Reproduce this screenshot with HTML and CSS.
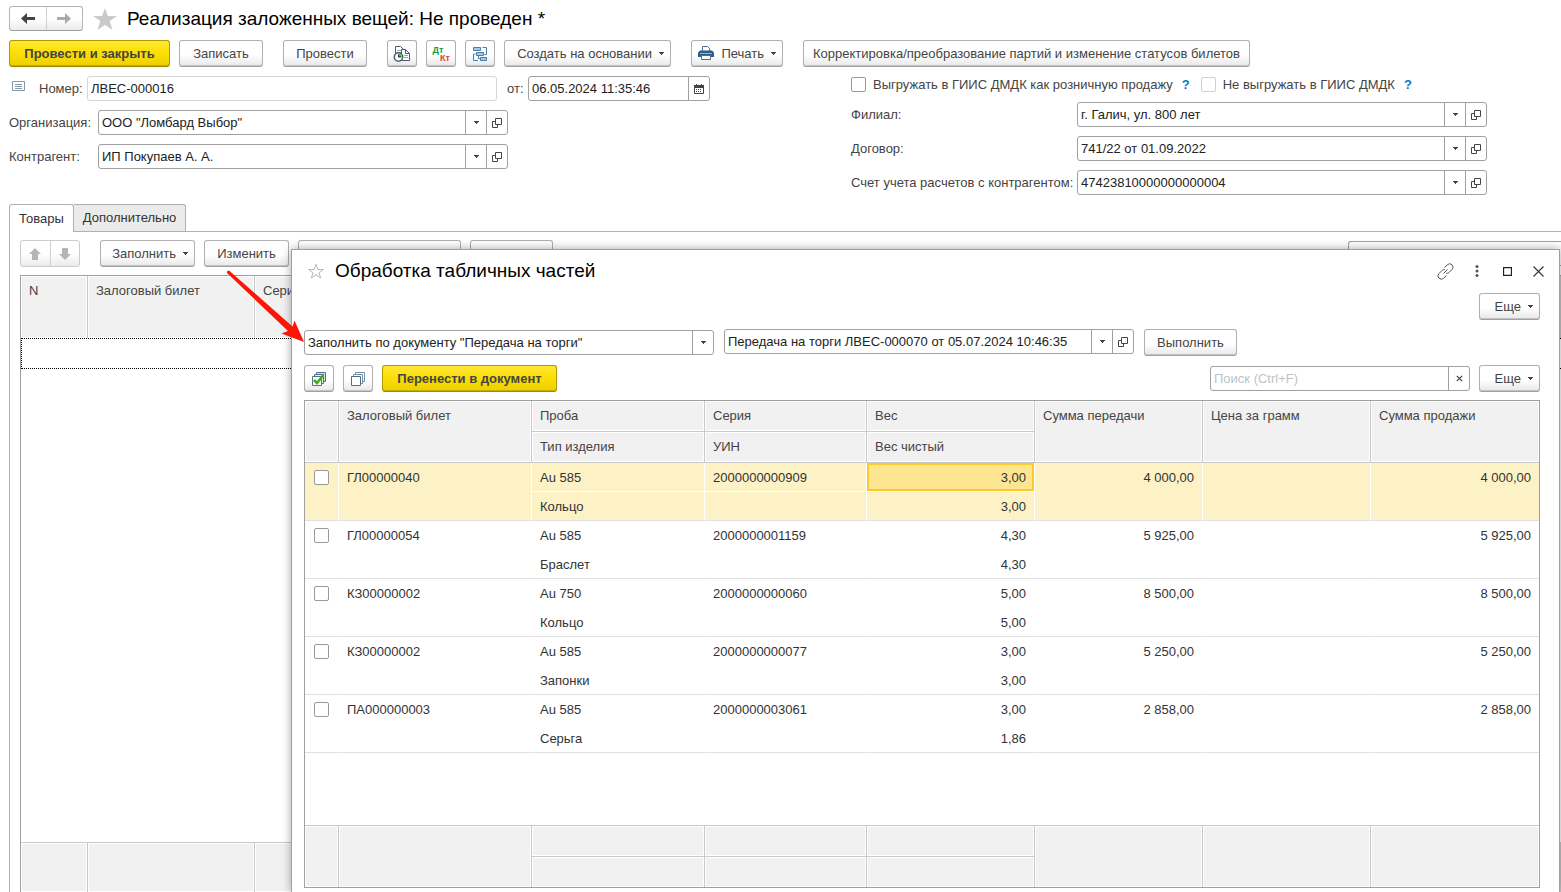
FILE: index.html
```
<!DOCTYPE html>
<html lang="ru">
<head>
<meta charset="utf-8">
<title>Реализация заложенных вещей</title>
<link rel="stylesheet" href="styles.css">
</head>
<body>
<svg class="defs" aria-hidden="true">
  <symbol id="caret" viewBox="0 0 5 3"><path d="M0 0h5v1H4v1H3v1H2V2H1V1H0z"/></symbol>
  <symbol id="open" viewBox="0 0 10 10"><path d="M3.5.5h6v6h-6zM3 3.5H.5v6h5V7" fill="none" stroke="#444"/></symbol>
</svg>
<div class="page">
  <header class="head">
    <div class="pair nav">
      <button type="button" aria-label="Назад"><svg width="14" height="11" viewBox="0 0 14 11"><path d="M0 5.5 6 0v4h8v3H6v4z" fill="#444"/></svg></button>
      <button type="button" aria-label="Вперед"><svg width="14" height="11" viewBox="0 0 14 11"><path d="M14 5.5 8 0v4H0v3h8v4z" fill="#aaa"/></svg></button>
    </div>
    <svg class="star" width="24" height="22" viewBox="0 0 24 22"><path d="m12 0 2.9 8H24l-7.300 5.100L19.500 22 12 16.700 4.500 22l2.800-8.900L0 8h9.100z" fill="#c8cacc"/></svg>
    <h1>Реализация заложенных вещей: Не проведен *</h1>
  </header>

  <div class="bar commands">
    <button type="button" class="btn main post">Провести и закрыть</button>
    <button type="button" class="btn save wide-gap">Записать</button>
    <button type="button" class="btn save wide-gap">Провести</button>
    <button type="button" class="btn icon" aria-label="Движения документа"><svg width="18" height="18" viewBox="0 0 18 18" fill="#fff" stroke="#47606f"><path d="M2.500 1.500h5l3 3v8h-8z"/><path d="M4 5.500h4M4 7.500h4" stroke="#9aabb5"/><path d="M8.500 4.500h4l4 4v7h-8z"/><path d="M12.500 4.500v4h4" fill="none"/><path d="M11 10.500h4M11 12.500h4" stroke="#9aabb5"/><circle cx="5.500" cy="12" r="4.200" stroke-width="1.500"/><path d="M5.500 12V8.500A3.500 3.500 0 0 1 9 12z" fill="#4bc83f" stroke="none"/><path d="M5.500 9.500V12H8" fill="none" stroke="#222"/></svg></button>
    <button type="button" class="btn icon dtkt" aria-label="Проводки"><span class="dt">Дт</span><span class="kt">Кт</span></button>
    <button type="button" class="btn icon" aria-label="Структура подчиненности"><svg width="16" height="16" viewBox="0 0 16 16" fill="#a9c8e4" stroke="#4b7fa8"><path d="M1.500 1.500h7v3h-7zM4.500 6.500h7v3h-7zM8.500 11.500h6v3h-6z"/><path d="M10.500 1.500h4v7h-2M3.500 8H1.500v6.500h4.500M6.500 10v2.500h2" fill="none"/></svg></button>
    <button type="button" class="btn create wide-gap">Создать на основании<svg class="caret"><use href="#caret"/></svg></button>
    <button type="button" class="btn print wide-gap"><svg width="16" height="15" viewBox="0 0 16 15"><path d="M4.500 5V.5h5l2 2V5" fill="#fff" stroke="#4b6f92"/><path d="M2 4.500h12l2 2V11H0V6.500z" fill="#2d5c8a"/><path d="M2 7.500h12" stroke="#8fb4d6"/><path d="M3.500 9.500h9v4h-9z" fill="#fff" stroke="#4b6f92"/></svg>Печать<svg class="caret"><use href="#caret"/></svg></button>
    <button type="button" class="btn adjust">Корректировка/преобразование партий и изменение статусов билетов</button>
  </div>

  <div class="form">
    <div class="rows">
      <div class="row">
        <svg class="note" width="14" height="11" viewBox="0 0 14 11"><path d="M.5.500h12v9H.5z" fill="#fff" stroke="#8699a8"/><path d="M3 3.500h7M3 5.500h7M3 7.500h7" stroke="#8699a8"/></svg>
        <label class="num" for="number">Номер:</label>
        <div class="field soft"><input id="number" value="ЛВЕС-000016"></div>
        <label class="from" for="date">от:</label>
        <div class="field date"><input id="date" value="06.05.2024 11:35:46"><button type="button" aria-label="Календарь"><svg width="10" height="10" viewBox="0 0 10 10"><path d="M.5 1.500h9v8h-9z" fill="none" stroke="#444"/><path d="M0 1h10v3H0zM2 0h1v1H2zM7 0h1v1H7z" fill="#444"/><path d="M2 5.500h6M2 7.500h6" stroke="#444" stroke-dasharray="1 1"/></svg></button></div>
      </div>
      <div class="row">
        <label class="cap" for="org">Организация:</label>
        <div class="field"><input id="org" value='ООО "Ломбард Выбор"'><button type="button" aria-label="Выбрать"><svg class="caret"><use href="#caret"/></svg></button><button type="button" aria-label="Открыть"><svg class="open"><use href="#open"/></svg></button></div>
      </div>
      <div class="row">
        <label class="cap" for="agent">Контрагент:</label>
        <div class="field"><input id="agent" value="ИП Покупаев А. А."><button type="button" aria-label="Выбрать"><svg class="caret"><use href="#caret"/></svg></button><button type="button" aria-label="Открыть"><svg class="open"><use href="#open"/></svg></button></div>
      </div>
    </div>
    <div class="rows right">
      <div class="row checks">
        <input type="checkbox" class="check" id="retail"><label for="retail">Выгружать в ГИИС ДМДК как розничную продажу</label><a class="help" href="#retail">?</a>
        <input type="checkbox" class="check pale" id="noexp"><label for="noexp">Не выгружать в ГИИС ДМДК</label><a class="help" href="#noexp">?</a>
      </div>
      <div class="row">
        <label class="cap" for="branch">Филиал:</label>
        <div class="field"><input id="branch" value="г. Галич, ул. 800 лет"><button type="button" aria-label="Выбрать"><svg class="caret"><use href="#caret"/></svg></button><button type="button" aria-label="Открыть"><svg class="open"><use href="#open"/></svg></button></div>
      </div>
      <div class="row">
        <label class="cap" for="contract">Договор:</label>
        <div class="field"><input id="contract" value="741/22 от 01.09.2022"><button type="button" aria-label="Выбрать"><svg class="caret"><use href="#caret"/></svg></button><button type="button" aria-label="Открыть"><svg class="open"><use href="#open"/></svg></button></div>
      </div>
      <div class="row">
        <label class="cap" for="account">Счет учета расчетов с контрагентом:</label>
        <div class="field"><input id="account" value="47423810000000000004"><button type="button" aria-label="Выбрать"><svg class="caret"><use href="#caret"/></svg></button><button type="button" aria-label="Открыть"><svg class="open"><use href="#open"/></svg></button></div>
      </div>
    </div>
  </div>

  <div class="tabs">
    <button type="button" class="tab active">Товары</button><button type="button" class="tab">Дополнительно</button>
  </div>
  <section class="panel">
    <div class="bar">
      <div class="pair move">
        <button type="button" aria-label="Вверх"><svg width="12" height="12" viewBox="0 0 12 12"><path d="M6 0l6 6H9v6H3V6H0z" fill="#b0b6bb"/></svg></button>
        <button type="button" aria-label="Вниз"><svg width="12" height="12" viewBox="0 0 12 12"><path d="M6 12l6-6H9V0H3v6H0z" fill="#b0b6bb"/></svg></button>
      </div>
      <button type="button" class="btn fill">Заполнить<svg class="caret"><use href="#caret"/></svg></button>
      <button type="button" class="btn edit">Изменить</button>
      <button type="button" class="btn pick">Перенести</button>
      <button type="button" class="btn add">Дополнить</button>
      <div class="field find"><input aria-label="Поиск" placeholder="Поиск (Ctrl+F)"></div>
    </div>
    <div class="goods">
      <table>
        <colgroup><col class="g1"><col class="g2"><col></colgroup>
        <thead><tr><th>N</th><th>Залоговый билет</th><th>Серия</th></tr></thead>
        <tbody><tr><td colspan="3"></td></tr></tbody>
      </table>
      <div class="goods-foot"><span></span><span></span><span></span></div>
    </div>
  </section>

  <section class="dialog" role="dialog" aria-labelledby="dlg">
    <header class="dlg-head">
      <svg width="18" height="16" viewBox="0 0 18 16"><path d="m9 1.300 1.900 5.200h5.600L12 9.800l1.700 5.200L9 11.800 4.300 15 6 9.800 1.500 6.500h5.600z" fill="none" stroke="#b4bac0"/></svg>
      <h2 id="dlg">Обработка табличных частей</h2>
      <div class="tools">
        <button type="button" aria-label="Ссылка"><svg width="17" height="17" viewBox="0 0 17 17" fill="none" stroke="#555"><path d="m7.500 4.500 2.800-2.700a3.200 3.200 0 0 1 4.700 4.700L12 9.500c-.9.800-2 1-3 .7M9.500 12.500l-2.800 2.700A3.200 3.200 0 0 1 2 10.500l3-3c.9-.8 2-1 3-.7M6.500 10.500l4-4"/></svg></button>
        <button type="button" aria-label="Меню"><svg width="4" height="12" viewBox="0 0 4 12" fill="#555"><circle cx="2" cy="1.500" r="1.500"/><circle cx="2" cy="6" r="1.500"/><circle cx="2" cy="10.500" r="1.500"/></svg></button>
        <button type="button" aria-label="Развернуть"><svg width="9" height="9" viewBox="0 0 9 9"><path d="M.5.500h8v8h-8z" fill="none" stroke="#222" stroke-width="1.300"/></svg></button>
        <button type="button" aria-label="Закрыть"><svg width="11" height="11" viewBox="0 0 11 11"><path d="m.5.500 10 10m0-10-10 10" stroke="#333" stroke-width="1.100"/></svg></button>
      </div>
    </header>
    <div class="bar more"><button type="button" class="btn menu">Еще<svg class="caret"><use href="#caret"/></svg></button></div>
    <div class="bar source">
      <div class="field"><input aria-label="Способ заполнения" value='Заполнить по документу "Передача на торги"'><button type="button" aria-label="Выбрать"><svg class="caret"><use href="#caret"/></svg></button></div>
      <div class="field"><input aria-label="Документ" value="Передача на торги ЛВЕС-000070 от 05.07.2024 10:46:35"><button type="button" aria-label="Выбрать"><svg class="caret"><use href="#caret"/></svg></button><button type="button" aria-label="Открыть"><svg class="open"><use href="#open"/></svg></button></div>
      <button type="button" class="btn run">Выполнить</button>
    </div>
    <div class="bar actions">
      <button type="button" class="btn icon" aria-label="Отметить все"><svg width="16" height="16" viewBox="0 0 16 16" fill="#fff" stroke="#56758a"><path d="M5.500 1.500h9v9h-9z" fill="#cfe3c8"/><path d="M3.500 3.500h9v9h-9z" fill="#e4efe0"/><path d="M1.500 5.500h9v9h-9z"/><path d="m3 9 3 3 6-7.500" fill="none" stroke="#3fae1e" stroke-width="2.600"/></svg></button>
      <button type="button" class="btn icon" aria-label="Снять отметки"><svg width="16" height="16" viewBox="0 0 16 16" fill="#fff" stroke="#7890a5"><path d="M5.500 1.500h9v9h-9z"/><path d="M3.500 3.500h9v9h-9z"/><path d="M1.500 5.500h9v9h-9z" stroke="#4f6f88"/></svg></button>
      <button type="button" class="btn main move-to">Перенести в документ</button>
      <div class="field search"><input aria-label="Поиск" placeholder="Поиск (Ctrl+F)"><button type="button" aria-label="Очистить"><svg width="7" height="7" viewBox="0 0 7 7"><path d="m.8.800 5.400 5.400m0-5.400L.8 6.200" stroke="#444" stroke-width="1.200"/></svg></button></div>
      <button type="button" class="btn menu">Еще<svg class="caret"><use href="#caret"/></svg></button>
    </div>
    <div class="list">
      <table>
        <colgroup><col class="c1"><col class="c2"><col class="c3"><col class="c4"><col class="c5"><col class="c6"><col class="c6"><col></colgroup>
        <thead>
          <tr><th rowspan="2"></th><th rowspan="2">Залоговый билет</th><th>Проба</th><th>Серия</th><th>Вес</th><th rowspan="2">Сумма передачи</th><th rowspan="2">Цена за грамм</th><th rowspan="2" class="end">Сумма продажи</th></tr>
          <tr><th>Тип изделия</th><th>УИН</th><th>Вес чистый</th></tr>
        </thead>
        <tbody class="current">
          <tr><td rowspan="2"><input type="checkbox" class="check" aria-label="ГЛ00000040"></td><td rowspan="2">ГЛ00000040</td><td>Au 585</td><td>2000000000909</td><td class="n focus">3,00</td><td rowspan="2" class="n">4 000,00</td><td rowspan="2"></td><td rowspan="2" class="n end">4 000,00</td></tr>
          <tr><td>Кольцо</td><td></td><td class="n">3,00</td></tr>
        </tbody>
        <tbody>
          <tr><td rowspan="2"><input type="checkbox" class="check" aria-label="ГЛ00000054"></td><td rowspan="2">ГЛ00000054</td><td>Au 585</td><td>2000000001159</td><td class="n">4,30</td><td rowspan="2" class="n">5 925,00</td><td rowspan="2"></td><td rowspan="2" class="n end">5 925,00</td></tr>
          <tr><td>Браслет</td><td></td><td class="n">4,30</td></tr>
        </tbody>
        <tbody>
          <tr><td rowspan="2"><input type="checkbox" class="check" aria-label="КЗ00000002"></td><td rowspan="2">КЗ00000002</td><td>Au 750</td><td>2000000000060</td><td class="n">5,00</td><td rowspan="2" class="n">8 500,00</td><td rowspan="2"></td><td rowspan="2" class="n end">8 500,00</td></tr>
          <tr><td>Кольцо</td><td></td><td class="n">5,00</td></tr>
        </tbody>
        <tbody>
          <tr><td rowspan="2"><input type="checkbox" class="check" aria-label="КЗ00000002"></td><td rowspan="2">КЗ00000002</td><td>Au 585</td><td>2000000000077</td><td class="n">3,00</td><td rowspan="2" class="n">5 250,00</td><td rowspan="2"></td><td rowspan="2" class="n end">5 250,00</td></tr>
          <tr><td>Запонки</td><td></td><td class="n">3,00</td></tr>
        </tbody>
        <tbody>
          <tr><td rowspan="2"><input type="checkbox" class="check" aria-label="ПА000000003"></td><td rowspan="2">ПА000000003</td><td>Au 585</td><td>2000000003061</td><td class="n">3,00</td><td rowspan="2" class="n">2 858,00</td><td rowspan="2"></td><td rowspan="2" class="n end">2 858,00</td></tr>
          <tr><td>Серьга</td><td></td><td class="n">1,86</td></tr>
        </tbody>
      </table>
      <div class="totals">
        <span class="tall"></span><span class="tall"></span><span></span><span></span><span></span><span class="tall"></span><span class="tall"></span><span class="tall end"></span><span></span><span></span><span></span>
      </div>
    </div>
  </section>

  <svg class="arrow" width="80" height="74" viewBox="0 0 80 74" aria-hidden="true"><path d="M1 3Q.5.5 3 .5L66.500 56.500l2-6L78 72l-22.500-8.500L62 61z" fill="#ff1408"/></svg>
</div>
</body>
</html>
```
FILE: styles.css
```
* { box-sizing: border-box; }
body {
  margin: 0;
  background: #fff;
  color: #444;
  font: 13px/16px "Liberation Sans", Arial, sans-serif;
}
button, input { font: inherit; color: inherit; }
button { margin: 0; padding: 0; border: 0; background: none; }
svg { flex: none; }
.defs { position: absolute; width: 0; height: 0; }
.page {
  position: relative;
  height: 100vh;
  overflow: hidden;
  display: flex;
  flex-direction: column;
  padding: 6px 0 0 9px;
}
h1, h2 { margin: 0; font-size: 19px; line-height: 24px; font-weight: 400; color: #000; white-space: nowrap; }

.head { display: flex; align-items: center; height: 25px; }
.star { margin: 0 10px; }
.pair {
  display: flex;
  border: 1px solid #b4b4b4;
  border-bottom-color: #a0a0a0;
  border-radius: 3px;
  background: linear-gradient(#fff 50%, #ebebeb);
}
.pair button { flex: 1; display: flex; align-items: center; justify-content: center; }
.pair button + button { border-left: 1px solid #d0d0d0; }
.nav { width: 74px; height: 25px; }
.move { width: 60px; height: 27px; margin-right: 11px; border-color: #ccc; }

.bar { display: flex; gap: 9px; }
.commands { margin-top: 9px; }
.btn {
  display: flex;
  flex: none;
  align-items: center;
  justify-content: center;
  height: 27px;
  padding: 0;
  border: 1px solid #b0b0b0;
  border-bottom-color: #a0a0a0;
  border-radius: 3px;
  background: linear-gradient(#fff 55%, #e8e8e8);
  box-shadow: inset 0 -1px #c4c4c4;
  white-space: nowrap;
}
.btn.main {
  border-color: #b09a00;
  border-bottom-color: #a08c00;
  background: linear-gradient(#ffe735, #fbde00 50%, #edcf00);
  box-shadow: inset 0 -1px #c4ac00;
  font-weight: 700;
}
.btn.icon { width: 30px; }
.wide-gap { margin-right: 11px; }
.post { width: 161px; }
.save { width: 84px; }
.create { width: 167px; }
.adjust { width: 447px; }
.fill { width: 95px; }
.edit { width: 85px; }
.add { width: 83px; }
.run { width: 93px; }
.move-to { width: 175px; }
.menu { width: 61px; }
.btn:has(.caret) { justify-content: flex-end; padding-right: 6px; }
.btn .caret { margin-left: 7px; }
.caret { width: 5px; height: 3px; fill: #444; }
.open { width: 10px; height: 10px; }
.print { width: 92px; }
.print svg:first-child { margin-right: 7px; }
.dtkt { flex-direction: column; font-size: 9px; line-height: 8px; font-weight: 700; }
.dt { color: #0a9a4a; margin-right: 6px; }
.kt { color: #e04040; margin-left: 8px; }

.form { display: grid; grid-template-columns: 842px 1fr; margin-top: 9px; }
.rows { display: flex; flex-direction: column; gap: 9px; }
.row { display: flex; align-items: center; }
.cap { width: 89px; white-space: nowrap; }
.right .cap { width: 226px; }
.checks { height: 17px; }
.note { margin: 0 13px 4px 3px; }
.num { width: 48px; }
.from { width: 31px; padding-left: 10px; }
.field {
  display: flex;
  flex: none;
  width: 410px;
  height: 25px;
  border: 1px solid #a0a0a0;
  border-radius: 3px;
  background: #fff;
}
.field input {
  flex: 1;
  min-width: 0;
  padding: 0 3px;
  border: 0;
  outline: 0;
  background: none;
  color: #222;
}
.field input::placeholder { color: #bfc3c8; opacity: 1; }
.field button {
  display: flex;
  align-items: center;
  justify-content: center;
  width: 21px;
  border-left: 1px solid #a0a0a0;
}
.soft { border-color: #d6d6d6; }
.date { width: 182px; }
.check {
  appearance: none;
  width: 15px;
  height: 15px;
  margin: 0;
  border: 1px solid #999;
  border-radius: 2px;
  background: #fff;
}
.pale { border-color: #d0d0d0; }
.checks .check { margin-right: 7px; }
.help { margin: 0 11px 0 9px; color: #0a7ac0; font-weight: 700; text-decoration: none; }

.tabs { display: flex; height: 27px; margin-top: 9px; }
.tab {
  height: 27px;
  padding: 0 9px;
  border: 1px solid #b0b0b0;
  border-left: 0;
  border-bottom: 0;
  border-radius: 0 3px 0 0;
  background: #ebebeb;
  color: #333;
}
.tab.active { z-index: 1; height: 28px; border-left: 1px solid #b0b0b0; border-radius: 3px 3px 0 0; background: #fff; }
.panel {
  flex: 1;
  display: flex;
  flex-direction: column;
  padding: 8px 0 0 10px;
  border: 1px solid #b0b0b0;
  border-width: 1px 0 0 1px;
}
.pick { width: 163px; justify-content: flex-start; padding-left: 13px; }
.find { width: 213px; margin: 1px 0 0 auto; border-right: 0; border-radius: 3px 0 0 3px; }
.goods {
  flex: 1;
  display: flex;
  flex-direction: column;
  justify-content: space-between;
  margin-top: 8px;
  border: 1px solid #a0a0a0;
  border-width: 1px 0 0 1px;
}
table { width: 100%; table-layout: fixed; border-collapse: separate; border-spacing: 0; }
th {
  padding: 7px 8px;
  border: 1px solid #c8c8c8;
  border-width: 0 1px 1px 0;
  background: #f1f1f1;
  box-shadow: inset 0 0 0 1px #fff;
  font-weight: 400;
  text-align: left;
  vertical-align: top;
}
.g1 { width: 67px; }
.g2 { width: 167px; }
.goods th { height: 62px; border-bottom: 0; }
.goods td { height: 31px; padding: 0; border: 1px dotted #000; border-right: 0; }
.goods-foot { display: grid; grid-template-columns: 67px 167px 1fr; height: 50px; border-top: 1px solid #c8c8c8; }
.goods-foot span, .totals span {
  border-right: 1px solid #c8c8c8;
  background: #f1f1f1;
  box-shadow: inset 0 0 0 1px #fff;
}

.dialog {
  position: absolute;
  inset: 249px 1px 0 291px;
  display: flex;
  flex-direction: column;
  padding: 0 19px 4px 12px;
  border: 1px solid #a0a0a0;
  border-bottom: 0;
  background: #fff;
  box-shadow: 0 0 9px rgba(0, 0, 0, .35);
}
.dlg-head { display: flex; align-items: center; gap: 10px; padding: 9px 0 0 3px; }
.tools { display: flex; margin: 0 -14px 0 auto; }
.tools button { display: flex; align-items: center; justify-content: center; width: 31px; height: 24px; }
.more { justify-content: flex-end; margin-top: 10px; }
.source { gap: 10px; margin-top: 9px; }
.source .field:first-child { margin-top: 1px; }
.actions { margin-top: 9px; }
.search { width: 260px; margin: 1px 0 0 auto; }
.list {
  flex: 1;
  display: flex;
  flex-direction: column;
  justify-content: space-between;
  margin-top: 8px;
  border: 1px solid #a0a0a0;
}
.c1 { width: 34px; }
.c2 { width: 193px; }
.c3 { width: 173px; }
.c4 { width: 162px; }
.c5, .c6 { width: 168px; }
.list th { height: 31px; }
.list td {
  height: 29px;
  padding: 7px 8px 5px;
  border: 0 solid transparent;
  border-width: 0 1px 1px 0;
  vertical-align: top;
  color: #333;
}
.list td[rowspan], .list tr + tr td { border-bottom-color: #e0e0e0; }
.list td:first-child[rowspan] { padding: 7px 0 0 9px; }
td .check { display: block; }
.n { text-align: right; }
.list .current td { border-right-color: #fff; background: #fdf2c6; }
.list .current tr:first-child td:not([rowspan]) { border-bottom-color: #fff; }
.list .current td.focus { background: #fee591; box-shadow: inset 0 0 0 2px #fcc926; }
.list .end { border-right: 0; }
.totals {
  display: grid;
  grid-template-columns: 34px 193px 173px 162px 168px 168px 168px 1fr;
  grid-template-rows: 31px 30px;
  border-top: 1px solid #c8c8c8;
}
.tall { grid-row: span 2; }
.totals span:not(.tall) { border-bottom: 1px solid #c8c8c8; }
.totals .tall ~ span:nth-last-child(-n+3) { border-bottom: 0; }
.arrow { position: absolute; left: 226px; top: 270px; }
```
